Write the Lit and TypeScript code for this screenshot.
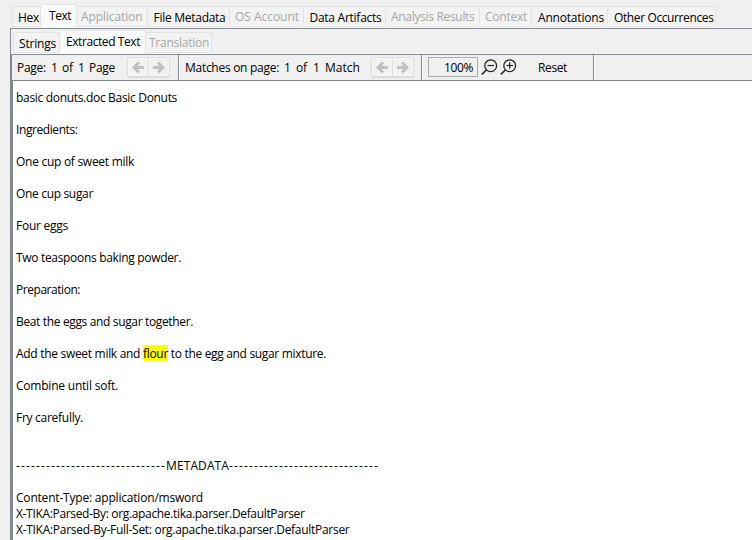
import { LitElement, html, css, svg } from "lit";
import { customElement, property } from "lit/decorators.js";
import { classMap } from "lit/directives/class-map.js";
import { styleMap } from "lit/directives/style-map.js";

/** A single-line label whose tracking is adjusted to fill a given width. */
@customElement("fit-text")
class FitText extends LitElement {
  @property() text = "";
  @property({ type: Number }) width = 0;

  static styles = css`
    :host { display: inline-block; height: 16px; white-space: pre; flex: none; vertical-align: top; }
    .label { display: inline-block; line-height: 18px; vertical-align: top; }
  `;

  protected updated() {
    const label = this.renderRoot.querySelector<HTMLElement>(".label")!;
    label.style.letterSpacing = "0px";
    const natural = label.getBoundingClientRect().width;
    label.style.letterSpacing = `${(this.width - natural) / this.text.length}px`;
  }

  render() {
    return html`<span class="label">${this.text}</span>`;
  }
}

interface Tab {
  label: string;
  width: number;
  text: number;
  pad: number;
  state?: "selected" | "disabled";
}

const mainTabs: Tab[] = [
  { label: "Hex", width: 29, text: 21, pad: 5 },
  { label: "Text", width: 36, text: 22, pad: 8, state: "selected" },
  { label: "Application", width: 71, text: 61.5, pad: 4, state: "disabled" },
  { label: "File Metadata", width: 82, text: 72, pad: 5.5 },
  { label: "OS Account", width: 74, text: 64, pad: 5, state: "disabled" },
  { label: "Data Artifacts", width: 82, text: 72, pad: 5.5 },
  { label: "Analysis Results", width: 94, text: 83.5, pad: 5, state: "disabled" },
  { label: "Context", width: 52, text: 42, pad: 5, state: "disabled" },
  { label: "Annotations", width: 76, text: 66, pad: 6 },
  { label: "Other Occurrences", width: 108, text: 99.5, pad: 6 },
];

const subTabs: Tab[] = [
  { label: "Strings", width: 47, text: 37, pad: 5 },
  { label: "Extracted Text", width: 86, text: 74, pad: 6, state: "selected" },
  { label: "Translation", width: 66, text: 60, pad: 3, state: "disabled" },
];

type Run = { text: string; width: number; hit?: boolean };
const dashes = "-".repeat(30);
const lines: Run[][] = [
  [{ text: "basic donuts.doc Basic Donuts", width: 161 }],
  [],
  [{ text: "Ingredients:", width: 61.5 }],
  [],
  [{ text: "One cup of sweet milk", width: 118 }],
  [],
  [{ text: "One cup sugar", width: 77 }],
  [],
  [{ text: "Four eggs", width: 52 }],
  [],
  [{ text: "Two teaspoons baking powder.", width: 165 }],
  [],
  [{ text: "Preparation:", width: 64 }],
  [],
  [{ text: "Beat the eggs and sugar together.", width: 177 }],
  [],
  [
    { text: "Add the sweet milk and ", width: 127 },
    { text: "flour", width: 25, hit: true },
    { text: " to the egg and sugar mixture.", width: 158 },
  ],
  [],
  [{ text: "Combine until soft.", width: 102 }],
  [],
  [{ text: "Fry carefully.", width: 67 }],
  [],
  [],
  [{ text: dashes, width: 150 }, { text: "METADATA", width: 63 }, { text: dashes, width: 150 }],
  [],
  [{ text: "Content-Type: application/msword", width: 187 }],
  [{ text: "X-TIKA:Parsed-By: org.apache.tika.parser.DefaultParser", width: 288.5 }],
  [{ text: "X-TIKA:Parsed-By-Full-Set: org.apache.tika.parser.DefaultParser", width: 333.5 }],
];

@customElement("app-root")
class AppRoot extends LitElement {
  static styles = css`
    :host {
      display: flex;
      flex-direction: column;
      box-sizing: border-box;
      width: 752px;
      height: 540px;
      padding-left: 10px;
      overflow: hidden;
      background: #f0f0f0;
      color: #000;
      font: 12px/16px "Open Sans", "Noto Sans", sans-serif;
    }
    .tabs { display: flex; flex: none; align-items: flex-end; box-sizing: border-box; }
    .main { height: 28px; padding-left: 2px; border-bottom: 1px solid #fbfbfb; }
    .sub { height: 25px; padding-left: 2px; border-bottom: 1px solid #fbfbfb; }
    .tab {
      box-sizing: border-box;
      flex: none;
      height: 21px;
      border: 1px solid #e3e3e3;
      border-left-width: 0;
      background: #f3f3f3;
      padding-top: 2px;
      white-space: nowrap;
    }
    .tab:first-child { border-left-width: 1px; }
    .selected { height: 23px; background: #fafafa; border-bottom-color: #fafafa; }
    .disabled { color: #a7a7a7; padding-top: 1px; }
    .frame {
      flex: 1;
      min-height: 0;
      display: flex;
      flex-direction: column;
      border: solid #828790;
      border-width: 1px 0 0 1px;
    }
    .viewer {
      flex: 1;
      min-height: 0;
      display: flex;
      flex-direction: column;
      border: solid #828790;
      border-width: 1px 0 0 1px;
    }
    .toolbar { flex: none; height: 25px; display: flex; align-items: center; padding-left: 5px; }
    .toolbar > fit-text { margin-bottom: 1px; }
    .gap5 { margin-left: 5px; }
    .gap6 { margin-left: 6px; }
    .gap7 { margin-left: 7px; }
    .gap8 { margin-left: 8px; }
    .buttons { display: flex; margin-top: -1px; }
    .arrow {
      box-sizing: border-box;
      width: 22px;
      height: 20px;
      border: 1px solid #dedede;
      border-radius: 2px;
      background: #f2f2f2;
      box-shadow: 0 1px 1px #d8d8d8, inset 0 0 0 1px #f7f7f7;
      display: flex;
      align-items: center;
      justify-content: center;
    }
    .arrow svg { flex: none; }
    .arrow + .arrow { margin-left: -1px; }
    .page-nav { margin-left: 12px; }
    .match-nav { margin-left: 11px; }
    .rule { box-sizing: border-box; flex: none; width: 2px; height: 25px; background: #fff; border-left: 1px solid #888c94; }
    .zoom {
      box-sizing: border-box;
      width: 50px;
      height: 20px;
      border: 1px solid #abadb3;
      padding: 1px 4px 0 0;
      text-align: right;
      margin: -1px 0 0 5px;
    }
    .glass { display: block; flex: none; margin: 0 0 0 3px; }
    .glass + .glass { margin-left: 2px; }
    .reset { margin-left: 21px; }
    .end { margin-left: 26px; }
    .text {
      flex: 1;
      min-height: 0;
      overflow: hidden;
      background: #fff;
      border: solid #828790;
      border-width: 1px 0 0 1px;
      padding: 8px 0 0 3px;
    }
    .line { display: flex; height: 16px; }
    .hit { background: #ff0; }
  `;

  private tab(t: Tab) {
    return html`<div
      class=${classMap({ tab: true, selected: t.state === "selected", disabled: t.state === "disabled" })}
      style=${styleMap({ width: `${t.width}px`, paddingLeft: `${t.pad}px` })}
    ><fit-text .text=${t.label} .width=${t.text}></fit-text></div>`;
  }

  private arrows(name: string) {
    return html`<div class="buttons ${name}">
      ${["M8 1.5 L3 6.5 L8 11.5 M3.5 6.5 H13", "M6 1.5 L11 6.5 L6 11.5 M10.5 6.5 H1"].map(
        (d) => html`<div class="arrow">
          <svg width="14" height="13" viewBox="0 0 14 13"><path d=${d} fill="none" stroke="#c0c0c0" stroke-width="2.8" /></svg>
        </div>`
      )}
    </div>`;
  }

  private glass(plus: boolean) {
    return html`<svg class="glass" width="17" height="17" viewBox="0 0 17 17" fill="none" stroke="#222">
      <circle cx="9.7" cy="6.7" r="5.9" stroke-width="1.25" />
      <path d="M5.3 11 L.8 15.5" stroke-width="1.7" />
      <path d="M6.5 6.5 H13" stroke-width="1.2" />
      ${plus ? svg`<path d="M9.7 3.3 V9.8" stroke-width="1.2" />` : ""}
    </svg>`;
  }

  private label(text: string, width: number, cls = "") {
    const box = cls === "hit" ? { width: `${width}px` } : {};
    return html`<fit-text class=${cls} style=${styleMap(box)} .text=${text} .width=${width}></fit-text>`;
  }

  render() {
    return html`
      <div class="tabs main">${mainTabs.map((t) => this.tab(t))}</div>
      <div class="frame">
        <div class="tabs sub">${subTabs.map((t) => this.tab(t))}</div>
        <div class="viewer">
          <div class="toolbar">
            ${this.label("Page:", 29)} ${this.label("1", 6, "gap5")} ${this.label("of", 11, "gap5")}
            ${this.label("1", 6, "gap5")} ${this.label("Page", 26, "gap5")}
            ${this.arrows("page-nav")}
            <div class="rule gap8"></div>
            ${this.label("Matches on page:", 94, "gap5")} ${this.label("1", 6, "gap5")}
            ${this.label("of", 11, "gap6")} ${this.label("1", 6, "gap6")} ${this.label("Match", 35, "gap6")}
            ${this.arrows("match-nav")}
            <div class="rule gap7"></div>
            <div class="zoom">${this.label("100%", 29)}</div>
            ${this.glass(false)} ${this.glass(true)}
            ${this.label("Reset", 29, "reset")}
            <div class="rule end"></div>
          </div>
          <div class="text">
            ${lines.map(
              (runs) => html`<div class="line">${runs.map((r) => this.label(r.text, r.width, r.hit ? "hit" : ""))}</div>`
            )}
          </div>
        </div>
      </div>
    `;
  }
}
